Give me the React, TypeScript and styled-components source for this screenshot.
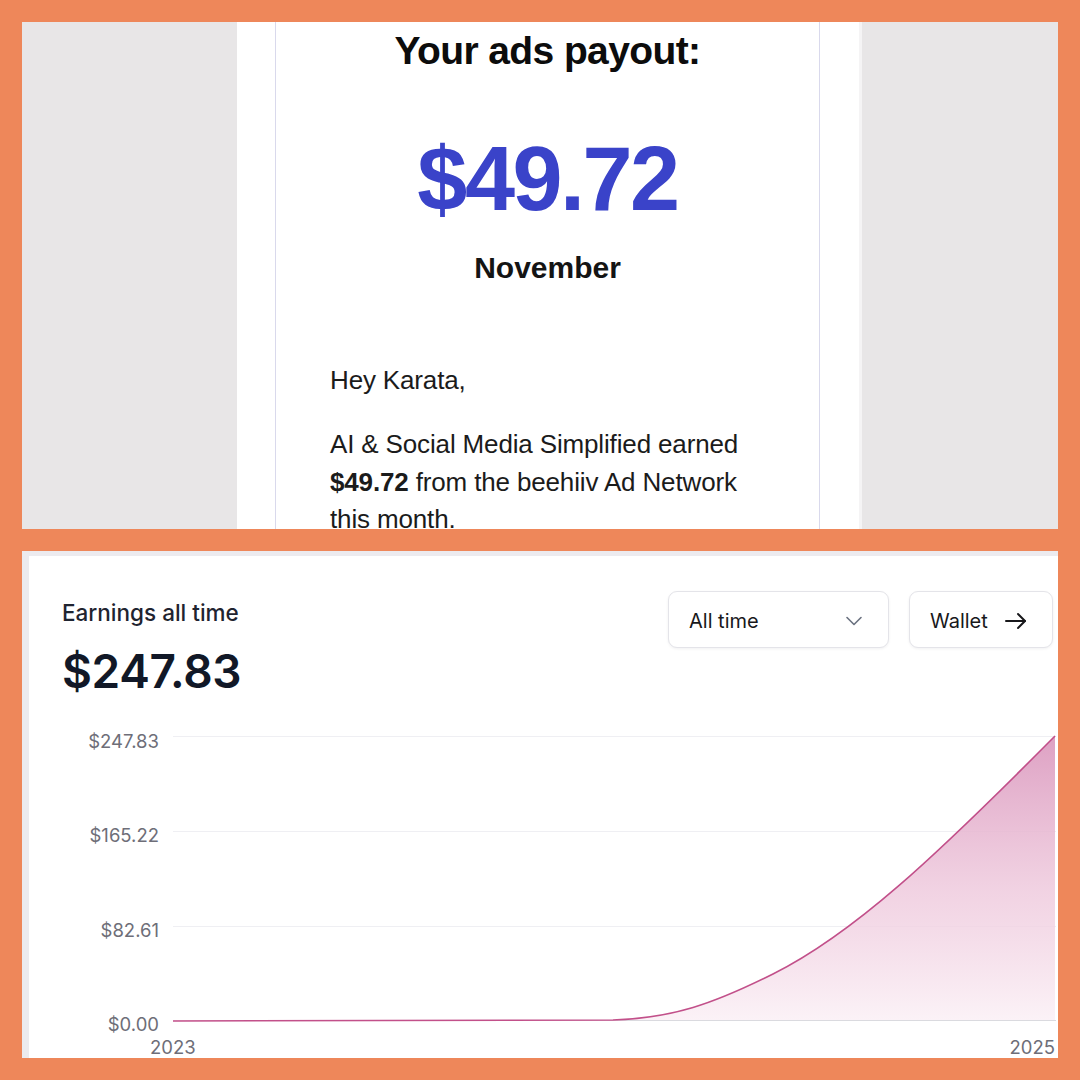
import React from "react";
import styled, { createGlobalStyle } from "styled-components";
import { ChevronDown } from "lucide-react";

const Global = createGlobalStyle`
  html, body { margin: 0; padding: 0; background: #EE875A; }
  #root { width: 1080px; height: 1080px; }
`;

const Frame = styled.div`
  width: 1080px;
  height: 1080px;
  box-sizing: border-box;
  padding: 22px;
  display: flex;
  flex-direction: column;
  gap: 22px;
  background: #ee875a;
`;

/* ---------- top: email screenshot ---------- */

const EmailPanel = styled.section`
  height: 507px;
  flex: none;
  background: #e8e6e7;
  overflow: hidden;
  display: flex;
  padding-left: 215px;
`;

const EmailSheet = styled.div`
  width: 625px;
  box-sizing: border-box;
  background: #fff;
  padding-left: 38px;
  border-right: 3px solid #f5f4f5;
  display: flex;
`;

const EmailBody = styled.div`
  width: 545px;
  box-sizing: border-box;
  border-left: 1px solid #d9d9ec;
  border-right: 1px solid #d9d9ec;
  padding-top: 6px;
  text-align: center;
  font-family: "Liberation Sans", Arial, Helvetica, sans-serif;
  color: #0c0c0c;
`;

const Heading = styled.h1`
  margin: 0;
  font-size: 39px;
  line-height: 46px;
  font-weight: 700;
  letter-spacing: -0.6px;
`;

const Payout = styled.div`
  margin-top: 55px;
  font-size: 90px;
  line-height: 100px;
  font-weight: 700;
  letter-spacing: -2.5px;
  color: #3a43c9;
`;

const Month = styled.div`
  margin-top: 21px;
  font-size: 30px;
  line-height: 36px;
  font-weight: 700;
  color: #141414;
`;

const Letter = styled.div`
  margin-top: 76px;
  padding-left: 54px;
  width: 416px;
  text-align: left;
  font-size: 26px;
  line-height: 37.5px;
  letter-spacing: -0.15px;
  color: #1b1b1b;
`;

const Para = styled.p`
  margin: 0 0 26.5px;
`;

const Strong = styled.strong`
  font-weight: 700;
`;

/* ---------- bottom: earnings dashboard ---------- */

const EarningsPanel = styled.section`
  height: 507px;
  flex: none;
  box-sizing: border-box;
  background: #ecebef;
  padding: 5px 0 0 7px;
  display: flex;
`;

const Card = styled.div`
  flex: 1;
  background: #fff;
  display: flex;
  flex-direction: column;
  overflow: hidden;
  font-family: Inter, "Noto Sans", sans-serif;
`;

const Header = styled.div`
  display: flex;
  justify-content: space-between;
  align-items: flex-start;
  padding: 35px 5px 0 33px;
`;

const Summary = styled.div`
  display: flex;
  flex-direction: column;
`;

const Title = styled.div`
  margin-top: 9px;
  font-size: 22.5px;
  line-height: 26px;
  font-weight: 500;
  color: #1f2430;
`;

const Total = styled.div`
  margin-top: 17px;
  font-size: 46px;
  line-height: 56px;
  font-weight: 600;
  letter-spacing: -0.3px;
  color: #111827;
`;

const Controls = styled.div`
  display: flex;
  gap: 20px;
`;

const Control = styled.button<{ $width: number; $gap?: number }>`
  width: ${(p) => p.$width}px;
  height: 57px;
  box-sizing: border-box;
  border: 1px solid #e4e4e9;
  border-radius: 9px;
  background: #fff;
  box-shadow: 0 1px 3px rgba(16, 24, 40, 0.06);
  display: flex;
  align-items: center;
  justify-content: ${(p) => (p.$gap ? "flex-start" : "space-between")};
  gap: ${(p) => p.$gap ?? 0}px;
  padding: 2px 20px 0 20px;
  font-family: Inter, "Noto Sans", sans-serif;
  font-size: 20px;
  font-weight: 400;
  color: #18181b;
  cursor: pointer;
`;

const ChartGrid = styled.div`
  margin-top: 20px;
  display: grid;
  grid-template-columns: 144px 883px;
  height: 315px;
`;

const YAxis = styled.div`
  display: flex;
  flex-direction: column;
  justify-content: space-between;
  align-items: flex-end;
  padding: 12px 14px 0 0;
`;

const AxisLabel = styled.span`
  font-size: 18.5px;
  line-height: 20px;
  color: #6e6e78;
`;

const XAxis = styled.div`
  margin-top: 5px;
  display: flex;
  justify-content: space-between;
  padding: 0 3px 0 121px;
  line-height: 17px;

  & > span {
    line-height: 17px;
  }
`;

const PlotSvg = styled.svg`
  display: block;
`;

const curve =
  "M0,302 L440,301 C500,299 540,285 600,255 C680,215 760,140 882,17";

function Plot() {
  return (
    <PlotSvg width={883} height={315} viewBox="0 0 883 315">
      <defs>
        <linearGradient id="earnFill" x1="0" y1="0" x2="0" y2="1">
          <stop offset="0%" stopColor="#dc9cc0" stopOpacity="0.95" />
          <stop offset="55%" stopColor="#eec8dc" stopOpacity="0.8" />
          <stop offset="100%" stopColor="#fbf1f6" stopOpacity="0.9" />
        </linearGradient>
      </defs>
      {[17, 112, 207].map((y) => (
        <line key={y} x1={0} x2={883} y1={y + 0.5} y2={y + 0.5} stroke="#efeff3" strokeWidth={1} />
      ))}
      <line x1={0} x2={883} y1={301.5} y2={301.5} stroke="#dadadf" strokeWidth={1.2} />
      <path d={`${curve} L882,301 L0,301 Z`} fill="url(#earnFill)" />
      <path d={curve} fill="none" stroke="#c2508a" strokeWidth={1.6} />
    </PlotSvg>
  );
}

function WalletArrow() {
  return (
    <svg width="22" height="18" viewBox="0 0 22 18" fill="none" stroke="#18181b" strokeWidth="2" strokeLinecap="round" strokeLinejoin="round">
      <path d="M1 9h19" />
      <path d="M13 2l7 7-7 7" />
    </svg>
  );
}

export default function App() {
  return (
    <>
      <Global />
      <Frame>
        <EmailPanel>
          <EmailSheet>
            <EmailBody>
              <Heading>Your ads payout:</Heading>
              <Payout>$49.72</Payout>
              <Month>November</Month>
              <Letter>
                <Para>Hey Karata,</Para>
                <Para>
                  AI &amp; Social Media Simplified earned <Strong>$49.72</Strong> from the beehiiv Ad Network this month.
                </Para>
              </Letter>
            </EmailBody>
          </EmailSheet>
        </EmailPanel>

        <EarningsPanel>
          <Card>
            <Header>
              <Summary>
                <Title>Earnings all time</Title>
                <Total>$247.83</Total>
              </Summary>
              <Controls>
                <Control $width={221}>
                  <span>All time</span>
                  <ChevronDown size={28} strokeWidth={1.4} color="#6b7280" />
                </Control>
                <Control $width={144} $gap={17}>
                  <span>Wallet</span>
                  <WalletArrow />
                </Control>
              </Controls>
            </Header>
            <ChartGrid>
              <YAxis>
                <AxisLabel>$247.83</AxisLabel>
                <AxisLabel>$165.22</AxisLabel>
                <AxisLabel>$82.61</AxisLabel>
                <AxisLabel>$0.00</AxisLabel>
              </YAxis>
              <Plot />
            </ChartGrid>
            <XAxis>
              <AxisLabel>2023</AxisLabel>
              <AxisLabel>2025</AxisLabel>
            </XAxis>
          </Card>
        </EarningsPanel>
      </Frame>
    </>
  );
}
